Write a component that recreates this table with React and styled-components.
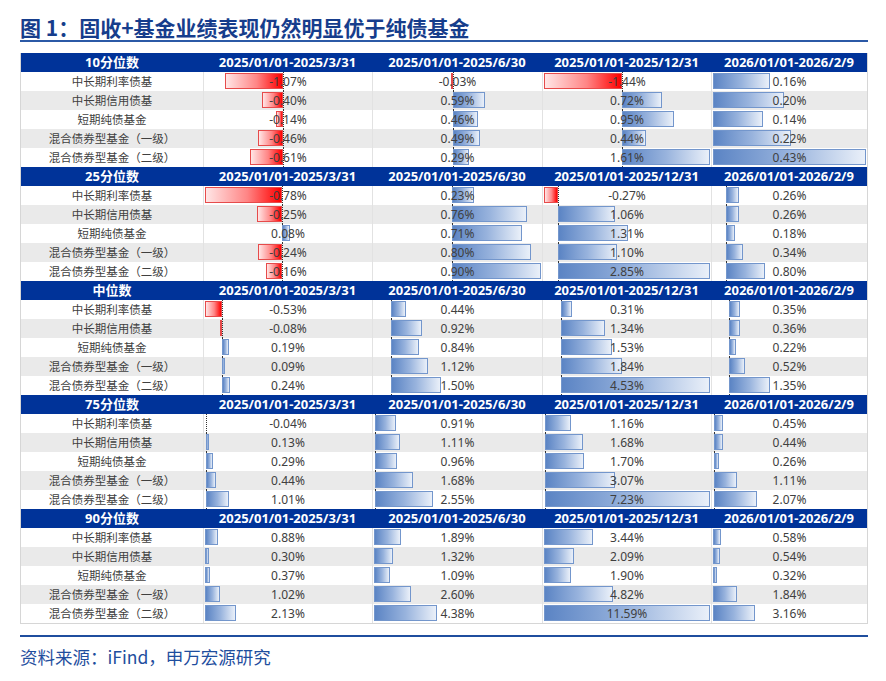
import React from 'react';
import styled, { createGlobalStyle } from 'styled-components';

const GlobalStyle = createGlobalStyle`
  html, body {
    margin: 0;
    padding: 0;
    background: #ffffff;
  }
  body {
    font-family: "Noto Sans", "Noto Sans CJK SC", sans-serif;
  }
`;

const COL_WIDTHS = [169, 170, 169, 156];

const LABELS = [
  '中长期利率债基',
  '中长期信用债基',
  '短期纯债基金',
  '混合债券型基金（一级）',
  '混合债券型基金（二级）',
];

const PERIODS = [
  '2025/01/01-2025/3/31',
  '2025/01/01-2025/6/30',
  '2025/01/01-2025/12/31',
  '2026/01/01-2026/2/9',
];

// each section: ranges per column (data bar min / max), rows of values
const SECTIONS = [
  {
    name: '10分位数',
    ranges: [[-1.44, 1.61], [-1.44, 1.61], [-1.44, 1.61], [0, 0.43]],
    rows: [
      [-1.07, -0.03, -1.44, 0.16],
      [-0.4, 0.59, 0.72, 0.2],
      [-0.14, 0.46, 0.95, 0.14],
      [-0.46, 0.49, 0.44, 0.22],
      [-0.61, 0.29, 1.61, 0.43],
    ],
  },
  {
    name: '25分位数',
    ranges: [[-0.78, 0.9], [-0.78, 0.9], [-0.27, 2.85], [-0.27, 2.85]],
    rows: [
      [-0.78, 0.23, -0.27, 0.26],
      [-0.25, 0.76, 1.06, 0.26],
      [0.08, 0.71, 1.31, 0.18],
      [-0.24, 0.8, 1.1, 0.34],
      [-0.16, 0.9, 2.85, 0.8],
    ],
  },
  {
    name: '中位数',
    ranges: [[-0.53, 4.53], [-0.53, 4.53], [-0.53, 4.53], [-0.53, 4.53]],
    rows: [
      [-0.53, 0.44, 0.31, 0.35],
      [-0.08, 0.92, 1.34, 0.36],
      [0.19, 0.84, 1.53, 0.22],
      [0.09, 1.12, 1.84, 0.52],
      [0.24, 1.5, 4.53, 1.35],
    ],
  },
  {
    name: '75分位数',
    ranges: [[-0.04, 7.23], [-0.04, 7.23], [-0.04, 7.23], [-0.04, 7.23]],
    rows: [
      [-0.04, 0.91, 1.16, 0.45],
      [0.13, 1.11, 1.68, 0.44],
      [0.29, 0.96, 1.7, 0.26],
      [0.44, 1.68, 3.07, 1.11],
      [1.01, 2.55, 7.23, 2.07],
    ],
  },
  {
    name: '90分位数',
    ranges: [[0, 11.59], [0, 11.59], [0, 11.59], [0, 11.59]],
    rows: [
      [0.88, 1.89, 3.44, 0.58],
      [0.3, 1.32, 2.09, 0.54],
      [0.37, 1.09, 1.9, 0.32],
      [1.02, 2.6, 4.82, 1.84],
      [2.13, 4.38, 11.59, 3.16],
    ],
  },
];

const Page = styled.div`
  width: 886px;
  height: 681px;
  padding: 14px 0 0 20px;
  box-sizing: border-box;
  overflow: hidden;
`;

const Title = styled.h1`
  margin: 0;
  width: 848px;
  height: 26px;
  font-family: "Noto Sans CJK SC", sans-serif;
  font-size: 21px;
  line-height: 26px;
  font-weight: 700;
  color: #163d8c;
  border-bottom: 2px solid #2b59a6;
`;

const Table = styled.div`
  margin-top: 11px;
  width: 848px;
  box-sizing: border-box;
  border-left: 1px solid #d6d6d6;
  border-right: 1px solid #d6d6d6;
  border-bottom: 1px solid #d6d6d6;
`;

const Row = styled.div`
  display: grid;
  grid-template-columns: 182px ${COL_WIDTHS.map((w) => `${w}px`).join(' ')};
  height: 19px;
  background: ${(p) => (p.$head ? '#003399' : p.$shade ? '#eaeaea' : '#ffffff')};
`;

const HeadCell = styled.div`
  font-family: "Noto Sans", "Noto Sans CJK SC", sans-serif;
  font-size: 13px;
  line-height: 19px;
  font-weight: 700;
  color: #ffffff;
  text-align: center;
  white-space: nowrap;
`;

const LabelCell = styled.div`
  font-family: "Noto Sans CJK SC", sans-serif;
  font-size: 11.5px;
  line-height: 19px;
  color: #404040;
  text-align: center;
  white-space: nowrap;
`;

const DataCell = styled.div`
  position: relative;
  border-left: 1px solid #e2e2e2;
  box-sizing: border-box;
  font-size: 12px;
  line-height: 19px;
  color: #404040;
  text-align: center;
  white-space: nowrap;
`;

const Bar = styled.div`
  position: absolute;
  top: 1px;
  bottom: 2px;
  box-sizing: border-box;
  border: 1px solid ${(p) => (p.$neg ? '#e64b4b' : '#7396cc')};
  background: ${(p) =>
    p.$neg
      ? 'linear-gradient(to right, #ffe6e6 0%, #ff8585 55%, #ff0000 100%)'
      : 'linear-gradient(to right, #5b84c4 0%, #98b3dd 50%, #eaf0f9 100%)'};
`;

const Axis = styled.div`
  position: absolute;
  top: 0;
  bottom: 0;
  width: 0;
  border-left: 1px dotted #333333;
`;

const Value = styled.span`
  position: relative;
`;

const FootLine = styled.div`
  margin-top: 11px;
  width: 848px;
  border-top: 2px solid #1f4e9e;
`;

const Source = styled.div`
  margin-top: 9px;
  font-family: "Noto Sans CJK SC", sans-serif;
  font-size: 17.5px;
  line-height: 22px;
  color: #1f4e9e;
`;

const fmt = (v) => `${v.toFixed(2)}%`;

const BarCell = ({ value, range, width }) => {
  const [lo, hi] = range;
  const usable = width - 3;
  const span = hi - lo;
  const axis = 1 + (-lo / span) * usable;
  const len = (Math.abs(value) / span) * usable;
  const left = value < 0 ? axis - len : axis;
  return (
    <DataCell>
      {lo < 0 && <Axis style={{ left: `${axis}px` }} />}
      {len >= 1 && <Bar $neg={value < 0} style={{ left: `${left}px`, width: `${len}px` }} />}
      <Value>{fmt(value)}</Value>
    </DataCell>
  );
};

const Section = ({ section }) => (
  <>
    <Row $head>
      <HeadCell>{section.name}</HeadCell>
      {PERIODS.map((p) => (
        <HeadCell key={p}>{p}</HeadCell>
      ))}
    </Row>
    {section.rows.map((vals, i) => (
      <Row key={LABELS[i]} $shade={i % 2 === 1}>
        <LabelCell>{LABELS[i]}</LabelCell>
        {vals.map((v, j) => (
          <BarCell key={j} value={v} range={section.ranges[j]} width={COL_WIDTHS[j]} />
        ))}
      </Row>
    ))}
  </>
);

const App = () => (
  <Page>
    <GlobalStyle />
    <Title>图 1：固收+基金业绩表现仍然明显优于纯债基金</Title>
    <Table>
      {SECTIONS.map((s) => (
        <Section key={s.name} section={s} />
      ))}
    </Table>
    <FootLine />
    <Source>资料来源：iFind，申万宏源研究</Source>
  </Page>
);

export default App;
